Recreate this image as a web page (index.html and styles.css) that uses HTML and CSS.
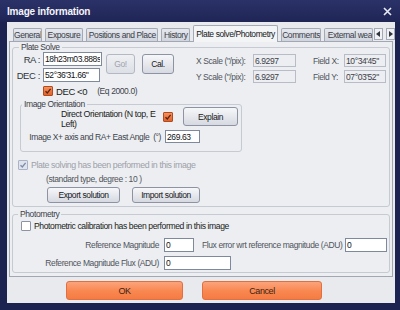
FILE: index.html
```html
<!DOCTYPE html>
<html lang="en">
<head>
    <meta charset="UTF-8">
    <title>Image information</title>
    <link rel="stylesheet" href="styles.css">
</head>
<body>
<div class="window">
    <div class="titlebar">
        <span class="title">Image information</span>
        <svg class="close" width="9" height="9" viewBox="0 0 9 9"><path d="M1 1L8 8M8 1L1 8" stroke="#e8ebf5" stroke-width="1.6"/></svg>
    </div>
    <div class="client">
        <div class="tabs">
            <div class="tab w29">General</div>
            <div class="tab w39">Exposure</div>
            <div class="tab w73">Positions and Place</div>
            <div class="tab w29">History</div>
            <div class="tab active">Plate solve/Photometry</div>
            <div class="tab w40">Comments</div>
            <div class="tab w50 clip">External wea</div>
            <div class="arrow"><svg width="5" height="6" viewBox="0 0 5 6"><path d="M4 0V6L0 3Z" fill="#30343c"/></svg></div>
            <div class="arrow"><svg width="5" height="6" viewBox="0 0 5 6"><path d="M1 0V6L5 3Z" fill="#30343c"/></svg></div>
        </div>
        <div class="panel">
            <fieldset class="group plate">
                <legend>Plate Solve</legend>
                <div class="coords">
                    <div class="radec">
                        <div class="pair"><span class="lbl">RA :</span><input class="field w59" value="18h23m03.888s"></div>
                        <div class="pair"><span class="lbl">DEC :</span><input class="field w57" value="52°36'31.66&quot;"></div>
                    </div>
                    <button class="btn go" disabled>Go!</button>
                    <button class="btn cal">Cal.</button>
                    <div class="scales">
                        <div class="pair"><span class="slbl">X Scale ("/pix):</span><input class="field ro w43" value="6.9297" readonly></div>
                        <div class="pair"><span class="slbl">Y Scale ("/pix):</span><input class="field ro w43" value="6.9297" readonly></div>
                    </div>
                    <div class="fields">
                        <div class="pair"><span class="flbl">Field X:</span><input class="field ro w42" value="10°34'45&quot;" readonly></div>
                        <div class="pair"><span class="flbl">Field Y:</span><input class="field ro w42" value="07°03'52&quot;" readonly></div>
                    </div>
                </div>
                <div class="dec-row">
                    <span class="chk on"><svg width="8" height="8" viewBox="0 0 8 8"><path d="M1.5 4.2L3.3 6L6.6 1.8" fill="none" stroke="#5a2210" stroke-width="1.3"/></svg></span>
                    <span class="dec-lbl">DEC &lt;0</span>
                    <span class="eq">(Eq 2000.0)</span>
                </div>
                <fieldset class="group orient">
                    <legend>Image Orientation</legend>
                    <div class="orient-top">
                        <span class="direct">Direct Orientation (N top, E Left)</span>
                        <span class="chk on"><svg width="8" height="8" viewBox="0 0 8 8"><path d="M1.5 4.2L3.3 6L6.6 1.8" fill="none" stroke="#5a2210" stroke-width="1.3"/></svg></span>
                        <button class="btn explain">Explain</button>
                    </div>
                    <div class="pair angle">
                        <span class="alabel">Image X+ axis and RA+ East Angle&nbsp; (°)</span>
                        <input class="field w35" value="269.63">
                    </div>
                </fieldset>
                <div class="solved">
                    <span class="chk dis"><svg width="8" height="8" viewBox="0 0 8 8"><path d="M1.5 4.2L3.3 6L6.6 1.8" fill="none" stroke="#7c8aa8" stroke-width="1.3"/></svg></span>
                    <span>Plate solving has been performed in this image</span>
                </div>
                <div class="std">(standard type, degree : 10 )</div>
                <div class="sol-btns">
                    <button class="btn export">Export solution</button>
                    <button class="btn import">Import solution</button>
                </div>
            </fieldset>
            <fieldset class="group photo">
                <legend>Photometry</legend>
                <div class="calib">
                    <span class="chk off"></span>
                    <span>Photometric calibration has been performed in this image</span>
                </div>
                <div class="pair prow">
                    <span class="plbl">Reference Magnitude</span>
                    <input class="field w30" value="0">
                    <span class="flux">Flux error wrt reference magnitude (ADU)</span>
                    <input class="field w42" value="0">
                </div>
                <div class="pair prow">
                    <span class="plbl">Reference Magnitude Flux (ADU)</span>
                    <input class="field w67 h14" value="0">
                </div>
            </fieldset>
        </div>
        <div class="actions">
            <button class="obtn ok">OK</button>
            <button class="obtn cancel">Cancel</button>
        </div>
    </div>
</div>
</body>
</html>
```

FILE: styles.css
```css
body {
    margin: 0;
    background: #1a2047;
    font-family: "Liberation Sans", Arial, sans-serif;
    font-size: 8.5px;
    letter-spacing: -0.4px;
    color: #1a1c20;
}
.window {
    width: 400px;
    height: 310px;
    background: #1d2350;
    overflow: hidden;
}
.titlebar {
    height: 22px;
    display: flex;
    align-items: center;
    justify-content: space-between;
    padding: 0 8px 0 7px;
    background: linear-gradient(#2b3268, #1f2555);
}
.title {
    color: #f4f5fa;
    font-weight: bold;
    font-size: 10px;
    letter-spacing: -0.2px;
}
.close {
    margin-top: 1px;
}
.client {
    margin: 0 5px 0 7px;
    height: 281px;
    background: #e8eaee;
    padding-top: 2px;
    box-sizing: border-box;
}
.tabs {
    display: flex;
    align-items: flex-end;
    height: 17px;
    padding-left: 6px;
    gap: 3px;
}
.tab {
    height: 13px;
    line-height: 13px;
    text-align: center;
    background: linear-gradient(#e6e8ee, #d0d4dd);
    border: 1px solid #a4a9b6;
    border-bottom: none;
    border-radius: 2px 2px 0 0;
    color: #3a3e48;
    box-sizing: border-box;
    white-space: nowrap;
    overflow: hidden;
}
.tab.active {
    width: 86px;
    height: 17px;
    line-height: 16px;
    background: #f3f4f6;
    color: #14161a;
    margin-bottom: -1px;
    position: relative;
}
.w29 { width: 29px; }
.w39 { width: 39px; }
.w73 { width: 73px; }
.w40 { width: 40px; }
.w50 { width: 50px; }
.tab.clip {
    text-align: left;
    padding-left: 3px;
}
.arrow {
    width: 9px;
    height: 12px;
    margin-left: -2px;
    display: flex;
    align-items: center;
    justify-content: center;
    background: #f0f1f4;
    border: 1px solid #a4a9b6;
    box-sizing: border-box;
    margin-bottom: 1px;
}
.arrow + .arrow {
    margin-left: 0;
}
.panel {
    margin: 0 2px;
    height: 236px;
    border: 1px solid #a2a7b4;
    background: #eceef1;
    box-sizing: border-box;
    padding: 0 2px;
}
.group {
    margin: 0;
    padding: 0;
    border: 1px solid #c6cad2;
    border-radius: 3px;
    min-width: 0;
}
.group legend {
    padding: 0 2px;
    margin-left: 6px;
    line-height: 11px;
    color: #3c4048;
}
.plate {
    height: 165px;
    box-sizing: border-box;
}
.pair {
    display: flex;
    align-items: center;
    white-space: nowrap;
}
.field {
    font: inherit;
    letter-spacing: inherit;
    color: #101215;
    background: #fff;
    border: 1px solid #7f899c;
    height: 14px;
    padding: 0 1px;
    margin: 0;
    box-sizing: border-box;
    outline: none;
}
.field.ro {
    background: #eceef1;
    border-color: #b8bcc6;
    color: #3c4048;
    height: 13px;
}
.w59 { width: 59px; }
.w57 { width: 57px; }
.w43 { width: 43px; }
.w42 { width: 42px; }
.w35 { width: 35px; }
.w30 { width: 30px; }
.w67 { width: 67px; }
.coords {
    display: flex;
    height: 31px;
    margin-top: -1px;
}
.radec {
    display: flex;
    flex-direction: column;
    gap: 2px;
}
.lbl {
    width: 27px;
    text-align: right;
    margin-right: 3px;
    font-size: 9.5px;
    color: #30343a;
}
.btn {
    font: inherit;
    letter-spacing: inherit;
    color: #16181c;
    background: linear-gradient(#f6f7f9, #d6d9e1);
    border: 1px solid #8d93a3;
    border-radius: 3px;
    padding: 0;
    margin: 0;
}
.go {
    width: 29px;
    height: 20px;
    margin: 2px 0 0 4px;
    color: #9fa3ad;
    background: linear-gradient(#eef0f3, #dcdfe5);
    border-color: #b3b8c3;
}
.cal {
    width: 32px;
    height: 20px;
    margin: 2px 0 0 7px;
}
.scales {
    margin: 2px 0 0 22px;
    display: flex;
    flex-direction: column;
    gap: 3px;
}
.slbl {
    width: 57px;
    color: #50545c;
}
.fields {
    margin: 2px 0 0 17px;
    display: flex;
    flex-direction: column;
    gap: 3px;
}
.flbl {
    width: 31px;
    color: #50545c;
}
.chk {
    width: 10px;
    height: 10px;
    box-sizing: border-box;
    display: inline-flex;
    align-items: center;
    justify-content: center;
    border-radius: 1px;
    flex: none;
}
.chk.on {
    background: linear-gradient(#f6915c, #e0622c);
    border: 1px solid #b34a1e;
}
.chk.dis {
    background: #dfe3ec;
    border: 1px solid #aab3c6;
}
.chk.off {
    background: #fff;
    border: 1px solid #8c93a2;
}
.dec-row {
    display: flex;
    align-items: center;
    height: 12px;
    margin: 2px 0 0 30px;
    font-size: 9.5px;
}
.dec-lbl {
    margin: 0 10px 0 3px;
}
.eq {
    font-size: 8.5px;
    color: #40444c;
}
.orient {
    margin: 2px 0 0 7px;
    width: 222px;
    height: 53px;
    box-sizing: border-box;
}
.orient legend {
    margin-left: 1px;
}
.orient-top {
    display: flex;
    align-items: flex-start;
    margin-top: -3px;
    height: 20px;
}
.direct {
    margin: 2px 0 0 40px;
    width: 98px;
    line-height: 10px;
    font-size: 8.8px;
}
.orient-top .chk {
    margin: 5px 0 0 4px;
}
.explain {
    width: 55px;
    height: 19px;
    margin-left: 10px;
}
.angle {
    margin-top: 3px;
}
.alabel {
    width: 140px;
    text-align: right;
    margin-right: 4px;
    color: #40444c;
}
.angle .field {
    height: 13px;
}
.solved {
    display: flex;
    align-items: center;
    margin: 7px 0 0 5px;
    height: 11px;
    color: #9ca0a9;
    font-size: 8.8px;
}
.solved .chk {
    margin-right: 3px;
}
.std {
    margin: 4px 0 0 33px;
    height: 10px;
    color: #50545c;
}
.sol-btns {
    display: flex;
    gap: 12px;
    margin: 3px 0 0 34px;
}
.export {
    width: 73px;
    height: 16px;
}
.import {
    width: 68px;
    height: 16px;
}
.photo {
    margin-top: 2px;
    height: 64px;
    box-sizing: border-box;
}
.photo legend {
    margin-left: 5px;
}
.calib {
    display: flex;
    align-items: center;
    gap: 3px;
    margin: 0 0 0 8px;
    height: 12px;
    font-size: 8.6px;
}
.prow {
    margin-top: 6px;
}
.prow + .prow {
    margin-top: 4px;
}
.plbl {
    width: 146px;
    text-align: right;
    margin-right: 5px;
    color: #50545c;
}
.flux {
    width: 143px;
    margin-left: 8px;
    color: #50545c;
}
.field.h14 {
    height: 14px;
}
.actions {
    display: flex;
    gap: 19px;
    padding: 4px 0 0 59px;
}
.obtn {
    font: inherit;
    letter-spacing: inherit;
    font-size: 9px;
    color: #3a2418;
    height: 19px;
    border: 1px solid #e0703f;
    border-radius: 3px;
    background: linear-gradient(#fca37c, #f8874f 55%, #f47c44);
    padding: 0;
}
.ok {
    width: 117px;
}
.cancel {
    width: 120px;
}
```
